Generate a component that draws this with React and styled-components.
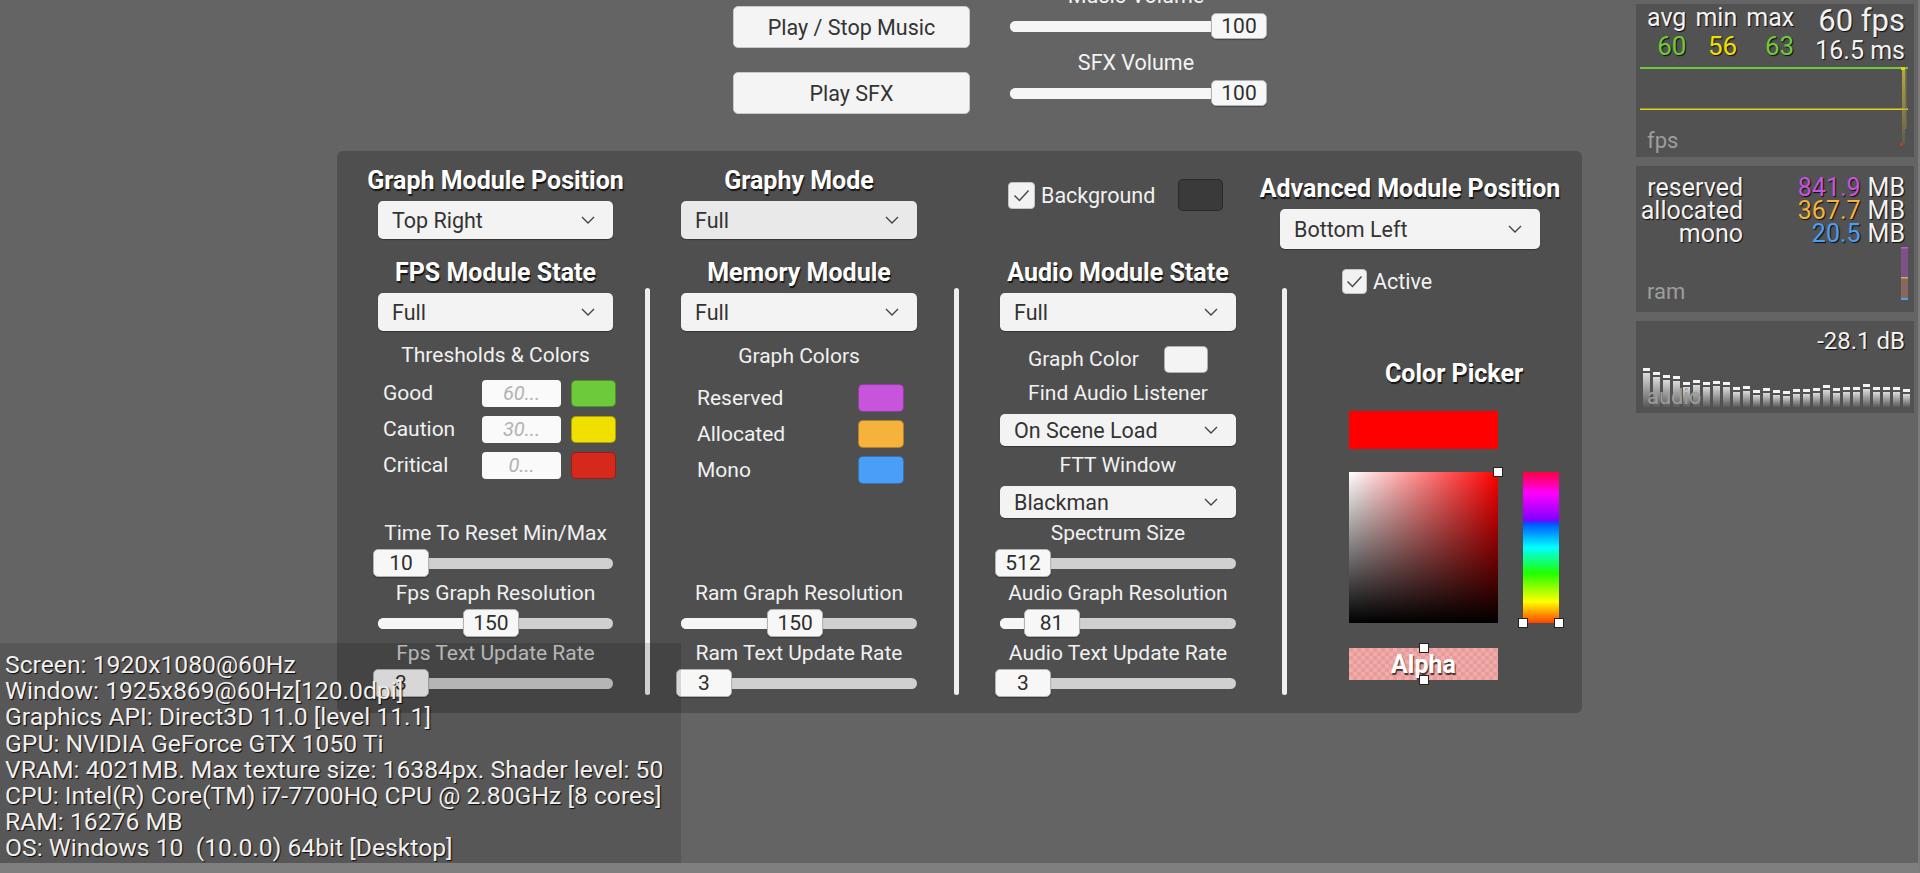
import React from "react";
import styled, { createGlobalStyle } from "styled-components";

const GlobalStyle = createGlobalStyle`
  html, body { margin: 0; padding: 0; background: #646464; }
  body { font-family: Roboto, "Noto Sans", "Liberation Sans", sans-serif; }
  * { box-sizing: border-box; }
`;

const Stage = styled.div`
  position: relative;
  width: 1920px;
  height: 873px;
  overflow: hidden;
  background: #646464;
  border-right: 2px solid #7b7b7b;
  border-bottom: 10px solid #7f7f7f;
  display: flex;
  flex-direction: column;
`;

/* ---------- top demo controls ---------- */

const TopControls = styled.div`
  height: 151px;
  flex-shrink: 0;
  display: flex;
  gap: 40px;
  padding-left: 733px;
`;

const ButtonColumn = styled.div`
  width: 237px;
  padding-top: 6px;
  display: flex;
  flex-direction: column;
  gap: 24px;
`;

const GameButton = styled.div`
  height: 42px;
  background: #f4f4f4;
  border: 1px solid #c9c9c9;
  border-radius: 5px;
  display: flex;
  align-items: center;
  justify-content: center;
  font-size: 21.5px;
  color: #333;
`;

const VolumeColumn = styled.div`
  width: 252px;
  margin-top: -18px;
  display: flex;
  flex-direction: column;
`;

const VolumeLabel = styled.div`
  height: 28px;
  line-height: 28px;
  text-align: center;
  color: #f3f3f3;
  font-size: 21.5px;
  margin-top: ${(p) => p.$mt || 0}px;
`;

/* ---------- slider ---------- */

const SliderRow = styled.div`
  position: relative;
  height: ${(p) => p.$h || 30}px;
  display: flex;
  align-items: center;
`;

const Track = styled.div`
  position: relative;
  flex: 1;
  height: 11px;
  border-radius: 6px;
  background: #d0d0d0;
`;

const Fill = styled.div`
  height: 100%;
  border-radius: 6px;
  background: #f6f6f6;
`;

const Knob = styled.div`
  position: absolute;
  top: 50%;
  transform: translateY(-50%);
  width: 56px;
  height: ${(p) => (p.$compact ? 26 : 28)}px;
  background: #f7f7f7;
  border: 1px solid #b4b4b4;
  border-radius: 5px;
  display: flex;
  align-items: center;
  justify-content: center;
  font-size: 21px;
  color: #2e2e2e;
  box-shadow: 0 1px 1px rgba(0, 0, 0, 0.3);
`;

const Slider = ({ value, pct, compact, h }) => (
  <SliderRow $h={h}>
    <Track>
      <Fill style={{ width: `calc(${pct} * (100% - 46px) + 23px)` }} />
      <Knob $compact={compact} style={{ left: `calc(${pct} * (100% - 46px) - 5px)` }}>
        {value}
      </Knob>
    </Track>
  </SliderRow>
);

/* ---------- settings panel ---------- */

const Panel = styled.div`
  margin-left: 337px;
  width: 1245px;
  height: 562px;
  flex-shrink: 0;
  background: #4f4f4f;
  border-radius: 6px;
  display: flex;
  padding: 12px 0 15px;
`;

const Column = styled.div`
  width: ${(p) => p.$w}px;
  flex-shrink: 0;
  padding: 0 ${(p) => p.$pr || 0}px 0 ${(p) => p.$pl || 0}px;
  display: flex;
  flex-direction: column;
`;

const Divider = styled.div`
  width: 5px;
  flex-shrink: 0;
  margin: 125px 0 3px;
  background: #efefef;
  border-radius: 3px;
`;

const Header = styled.div`
  height: 76px;
  flex-shrink: 0;
  display: flex;
  flex-direction: column;
`;

const Title = styled.div`
  height: 32px;
  line-height: 36px;
  margin-top: ${(p) => p.$mt || 0}px;
  display: flex;
  justify-content: center;
  font-size: 25px;
  font-weight: 700;
  color: #fff;
  white-space: nowrap;
  text-shadow: 1px 2px 1px rgba(0, 0, 0, 0.75);
`;

const Select = styled.div`
  height: ${(p) => p.$h || 38}px;
  margin-top: ${(p) => (p.$mt === undefined ? 6 : p.$mt)}px;
  flex-shrink: 0;
  background: ${(p) => (p.$dim ? "#e9e9e9" : "#f3f3f3")};
  border-radius: 5px;
  display: flex;
  align-items: center;
  justify-content: space-between;
  padding: 0 18px 0 14px;
  color: #333;
  font-size: 21.5px;
  box-shadow: 0 1px 1px rgba(0, 0, 0, 0.35);
`;

const Chevron = () => (
  <svg width="14" height="8" viewBox="0 0 14 8">
    <path d="M1 1 L7 7 L13 1" fill="none" stroke="#444" strokeWidth="1.4" />
  </svg>
);

const Dropdown = ({ children, ...rest }) => (
  <Select {...rest}>
    <span>{children}</span>
    <Chevron />
  </Select>
);

const Caption = styled.div`
  height: 26px;
  line-height: 26px;
  margin-top: ${(p) => p.$mt || 0}px;
  text-align: center;
  font-size: 21px;
  color: #f1f1f1;
  white-space: nowrap;
`;

const ThresholdList = styled.div`
  margin-top: 7px;
  display: flex;
  flex-direction: column;
`;

const ThresholdRow = styled.div`
  height: 36px;
  display: grid;
  grid-template-columns: 1fr 79px 45px;
  column-gap: 10px;
  align-items: center;
  padding-left: 5px;
  margin-right: -3px;
  color: #f1f1f1;
  font-size: 21px;
`;

const NumberField = styled.div`
  height: 27px;
  background: #fafafa;
  border-radius: 4px;
  display: flex;
  align-items: center;
  justify-content: center;
  color: #b3b3b3;
  font-style: italic;
  font-size: 20px;
`;

const Swatch = styled.div`
  width: ${(p) => p.$w || 45}px;
  height: ${(p) => p.$h || 27}px;
  background: ${(p) => p.$color};
  border: 1px solid rgba(0, 0, 0, 0.28);
  border-radius: 5px;
  flex-shrink: 0;
`;

const ColorList = styled.div`
  margin-top: 11px;
  display: flex;
  flex-direction: column;
  padding: 0 13px 0 16px;
`;

const ColorRow = styled.div`
  height: 36px;
  display: flex;
  align-items: center;
  justify-content: space-between;
  color: #f1f1f1;
  font-size: 21px;
`;

const SliderStack = styled.div`
  margin-top: auto;
  display: flex;
  flex-direction: column;
`;

const SliderLabel = styled(Caption)`
  height: 30px;
  line-height: 30px;
  color: ${(p) => (p.$muted ? "#d2d2d2" : "#f1f1f1")};
`;

const CheckRow = styled.div`
  height: ${(p) => p.$h || 32}px;
  margin-top: ${(p) => p.$mt || 0}px;
  margin-left: ${(p) => p.$ml || 0}px;
  display: flex;
  align-items: center;
  color: #f1f1f1;
  font-size: 21.5px;
`;

const Box = styled.span`
  width: ${(p) => p.$size || 27}px;
  height: ${(p) => p.$size || 27}px;
  margin-right: 6px;
  border-radius: 4px;
  background: #f2f2f2;
  border: 1px solid #c4c4c4;
  display: inline-flex;
  align-items: center;
  justify-content: center;
`;

const Check = ({ size }) => (
  <Box $size={size}>
    <svg width="17" height="13" viewBox="0 0 17 13">
      <path d="M1.5 6.5 L6.5 11.5 L15.5 1.5" fill="none" stroke="#4a4a4a" strokeWidth="1.5" />
    </svg>
  </Box>
);

const InlineSwatchRow = styled.div`
  height: 30px;
  margin-top: 13px;
  display: flex;
  align-items: center;
  justify-content: center;
  gap: 25px;
  color: #f1f1f1;
  font-size: 21px;
`;

const WideHeader = styled.div`
  margin-left: -7px;
  width: 260px;
  display: flex;
  flex-direction: column;
`;

/* ---------- color picker ---------- */

const PickerGrid = styled.div`
  margin: 62px 0 0 62px;
  display: grid;
  grid-template-columns: 149px 36px;
  grid-template-rows: 32px 38px 151px 34px;
  column-gap: 25px;
  row-gap: 23px;
  grid-template-areas:
    "title title"
    "preview ."
    "sv hue"
    "alpha .";
`;

const PickerTitle = styled(Title)`
  grid-area: title;
`;

const Preview = styled.div`
  grid-area: preview;
  background: #ff0000;
`;

const SatVal = styled.div`
  grid-area: sv;
  position: relative;
  background: linear-gradient(to top, #000, rgba(0, 0, 0, 0)),
    linear-gradient(to right, #fff, #ff0000);
`;

const HueBar = styled.div`
  grid-area: hue;
  position: relative;
  background: linear-gradient(
    to bottom,
    #ff0040 0%,
    #ff00ff 14%,
    #8000ff 32%,
    #0050ff 34%,
    #00ffff 50%,
    #20ff00 67%,
    #ffff00 86%,
    #ff4000 100%
  );
`;

const AlphaBar = styled.div`
  grid-area: alpha;
  position: relative;
  margin-top: 2px;
  background: repeating-conic-gradient(#f2abab 0 25%, #e79b9b 0 50%) 0 0 / 8px 8px;
  display: flex;
  align-items: center;
  justify-content: center;
  font-size: 25px;
  font-weight: 700;
  color: #fff;
  text-shadow: 1px 2px 1px rgba(0, 0, 0, 0.7);
`;

const Pin = styled.span`
  position: absolute;
  width: 10px;
  height: 10px;
  background: #fff;
  border: 1px solid #222;
  ${(p) => p.$pos}
`;

/* ---------- graphy monitor ---------- */

const Monitor = styled.div`
  position: absolute;
  top: 4px;
  right: 4px;
  width: 278px;
  display: flex;
  flex-direction: column;
  gap: 9px;
  color: #f2f2f2;
  text-shadow: 1px 1px 1px rgba(0, 0, 0, 0.85);
`;

const Module = styled.div`
  position: relative;
  height: ${(p) => p.$h}px;
  background: #525252;
  display: flex;
  flex-direction: column;
`;

const FpsTop = styled.div`
  height: 60px;
  display: flex;
  justify-content: space-between;
  padding: 0 9px 0 11px;
`;

const Stats = styled.div`
  display: flex;
  gap: 9px;
`;

const Stat = styled.div`
  display: flex;
  flex-direction: column;
  align-items: flex-end;
  font-size: 25px;
  line-height: 28px;
`;

const StatValue = styled.span`
  font-size: 26px;
  color: ${(p) => p.$color};
`;

const FpsReadout = styled.div`
  display: flex;
  flex-direction: column;
  align-items: flex-end;
`;

const BigFps = styled.div`
  font-size: 31px;
  line-height: 34px;
`;

const Ms = styled.div`
  font-size: 25px;
  line-height: 26px;
`;

const ModuleTag = styled.span`
  position: absolute;
  left: 11px;
  bottom: ${(p) => p.$b}px;
  font-size: 22px;
  line-height: 24px;
  color: #9d9d9d;
  text-shadow: none;
`;

const RamGrid = styled.div`
  margin-top: 10px;
  display: grid;
  grid-template-columns: 107px 1fr auto;
  column-gap: 7px;
  padding-right: 9px;
  font-size: 25px;
  line-height: 23px;
`;

const RamLabel = styled.span`
  text-align: right;
`;

const RamValue = styled.span`
  text-align: right;
  color: ${(p) => p.$color};
`;

const RamFoot = styled.div`
  flex: 1;
  display: flex;
  justify-content: flex-end;
  align-items: flex-end;
  padding: 0 6px 12px 0;
`;

const Db = styled.div`
  margin-top: 6px;
  padding-right: 9px;
  text-align: right;
  font-size: 24px;
  line-height: 28px;
`;

const Spectrum = styled.svg`
  margin: 10px 0 0 4px;
  display: block;
`;

/* ---------- system info overlay ---------- */

const SystemInfo = styled.div`
  position: absolute;
  left: 0;
  bottom: 0;
  width: 681px;
  height: 220px;
  padding: 9px 0 0 5px;
  background: rgba(0, 0, 0, 0.13);
  color: #f0f0f0;
  font-size: 24.7px;
  line-height: 26.2px;
  white-space: pre;
  text-shadow: 1px 1px 1px rgba(0, 0, 0, 0.9);
`;

const peaks = [368, 372, 375, 376, 382, 380, 382, 381, 382, 387, 386, 390, 388, 390, 391, 389, 389, 388, 385, 388, 387, 387, 384, 387, 387, 387, 389];

const infoLines = [
  "Screen: 1920x1080@60Hz",
  "Window: 1925x869@60Hz[120.0dpi]",
  "Graphics API: Direct3D 11.0 [level 11.1]",
  "GPU: NVIDIA GeForce GTX 1050 Ti",
  "VRAM: 4021MB. Max texture size: 16384px. Shader level: 50",
  "CPU: Intel(R) Core(TM) i7-7700HQ CPU @ 2.80GHz [8 cores]",
  "RAM: 16276 MB",
  "OS: Windows 10  (10.0.0) 64bit [Desktop]",
];

const Labelled = ({ label, value, pct, muted }) => (
  <>
    <SliderLabel $muted={muted}>{label}</SliderLabel>
    <Slider value={value} pct={pct} />
  </>
);

export default function App() {
  return (
    <>
      <GlobalStyle />
      <Stage>
        <TopControls>
          <ButtonColumn>
            <GameButton>Play / Stop Music</GameButton>
            <GameButton>Play SFX</GameButton>
          </ButtonColumn>
          <VolumeColumn>
            <VolumeLabel>Music Volume</VolumeLabel>
            <Slider value="100" pct={1} compact h={32} />
            <VolumeLabel $mt={7}>SFX Volume</VolumeLabel>
            <Slider value="100" pct={1} compact h={32} />
          </VolumeColumn>
        </TopControls>

        <Panel>
          <Column $w={308} $pl={41} $pr={32}>
            <Header>
              <Title>Graph Module Position</Title>
              <Dropdown>Top Right</Dropdown>
            </Header>
            <Title $mt={16}>FPS Module State</Title>
            <Dropdown>Full</Dropdown>
            <Caption $mt={11}>Thresholds &amp; Colors</Caption>
            <ThresholdList>
              <ThresholdRow>
                <span>Good</span>
                <NumberField>60...</NumberField>
                <Swatch $color="#6dcb3b" />
              </ThresholdRow>
              <ThresholdRow>
                <span>Caution</span>
                <NumberField>30...</NumberField>
                <Swatch $color="#efe000" />
              </ThresholdRow>
              <ThresholdRow>
                <span>Critical</span>
                <NumberField>0...</NumberField>
                <Swatch $color="#d4291b" />
              </ThresholdRow>
            </ThresholdList>
            <SliderStack>
              <Labelled label="Time To Reset Min/Max" value="10" pct={0} />
              <Labelled label="Fps Graph Resolution" value="150" pct={0.476} />
              <Labelled label="Fps Text Update Rate" value="3" pct={0} muted />
            </SliderStack>
          </Column>

          <Divider />

          <Column $w={304} $pl={31} $pr={37}>
            <Header>
              <Title>Graphy Mode</Title>
              <Dropdown $dim>Full</Dropdown>
            </Header>
            <Title $mt={16}>Memory Module</Title>
            <Dropdown>Full</Dropdown>
            <Caption $mt={12}>Graph Colors</Caption>
            <ColorList>
              <ColorRow>
                <span>Reserved</span>
                <Swatch $color="#c655db" $w={46} $h={28} />
              </ColorRow>
              <ColorRow>
                <span>Allocated</span>
                <Swatch $color="#f5b33b" $w={46} $h={28} />
              </ColorRow>
              <ColorRow>
                <span>Mono</span>
                <Swatch $color="#4a9ef5" $w={46} $h={28} />
              </ColorRow>
            </ColorList>
            <SliderStack>
              <Labelled label="Ram Graph Resolution" value="150" pct={0.48} />
              <Labelled label="Ram Text Update Rate" value="3" pct={0} />
            </SliderStack>
          </Column>

          <Divider />

          <Column $w={323} $pl={41} $pr={46}>
            <Header>
              <CheckRow $mt={16} $ml={8}>
                <Check />
                Background
                <Swatch $color="#3a3a3a" $w={45} $h={32} style={{ marginLeft: "auto", marginRight: 13 }} />
              </CheckRow>
            </Header>
            <Title $mt={16}>Audio Module State</Title>
            <Dropdown>Full</Dropdown>
            <InlineSwatchRow>
              <span>Graph Color</span>
              <Swatch $color="#f4f4f4" $w={44} $h={27} />
            </InlineSwatchRow>
            <Caption $mt={6}>Find Audio Listener</Caption>
            <Dropdown $h={32} $mt={8}>On Scene Load</Dropdown>
            <Caption $mt={6}>FTT Window</Caption>
            <Dropdown $h={32} $mt={8}>Blackman</Dropdown>
            <SliderStack>
              <Labelled label="Spectrum Size" value="512" pct={0} />
              <Labelled label="Audio Graph Resolution" value="81" pct={0.15} />
              <Labelled label="Audio Text Update Rate" value="3" pct={0} />
            </SliderStack>
          </Column>

          <Divider />

          <Column $w={295}>
            <WideHeader>
              <Title $mt={8}>Advanced Module Position</Title>
              <Dropdown $h={40}>Bottom Left</Dropdown>
            </WideHeader>
            <CheckRow $h={26} $mt={19} $ml={55}>
              <Check size={25} />
              Active
            </CheckRow>
            <PickerGrid>
              <PickerTitle>Color Picker</PickerTitle>
              <Preview />
              <SatVal>
                <Pin $pos="top: -5px; right: -5px;" />
              </SatVal>
              <HueBar>
                <Pin $pos="bottom: -5px; left: -5px;" />
                <Pin $pos="bottom: -5px; right: -5px;" />
              </HueBar>
              <AlphaBar>
                <Pin $pos="top: -5px; left: calc(50% - 5px);" />
                Alpha
                <Pin $pos="bottom: -5px; left: calc(50% - 5px);" />
              </AlphaBar>
            </PickerGrid>
          </Column>
        </Panel>

        <SystemInfo>{infoLines.join("\n")}</SystemInfo>

        <Monitor>
          <Module $h={153}>
            <FpsTop>
              <Stats>
                <Stat>
                  <span>avg</span>
                  <StatValue $color="#6dcb3b">60</StatValue>
                </Stat>
                <Stat>
                  <span>min</span>
                  <StatValue $color="#efe000">56</StatValue>
                </Stat>
                <Stat>
                  <span>max</span>
                  <StatValue $color="#6dcb3b">63</StatValue>
                </Stat>
              </Stats>
              <FpsReadout>
                <BigFps>60 fps</BigFps>
                <Ms>16.5 ms</Ms>
              </FpsReadout>
            </FpsTop>
            <svg width="278" height="93" viewBox="0 0 278 93">
              <defs>
                <linearGradient id="fpsbar" x1="0" y1="0" x2="0" y2="1">
                  <stop offset="0" stopColor="#b9aa3a" />
                  <stop offset="1" stopColor="#b9aa3a" stopOpacity="0.1" />
                </linearGradient>
              </defs>
              <rect x="4" y="3" width="268" height="2" fill="#6dcb3b" />
              <rect x="4" y="44.5" width="268" height="1.5" fill="#e2d21a" />
              <rect x="266" y="5" width="3" height="76" fill="url(#fpsbar)" />
              <rect x="269" y="5" width="1.5" height="60" fill="#8f8a55" opacity="0.6" />
              <rect x="265" y="3" width="4" height="3" fill="#e2d21a" />
              <rect x="264" y="79" width="2" height="3" fill="#e03020" />
            </svg>
            <ModuleTag $b={4}>fps</ModuleTag>
          </Module>

          <Module $h={146}>
            <RamGrid>
              <RamLabel>reserved</RamLabel>
              <RamValue $color="#c655db">841.9</RamValue>
              <span>MB</span>
              <RamLabel>allocated</RamLabel>
              <RamValue $color="#f5b33b">367.7</RamValue>
              <span>MB</span>
              <RamLabel>mono</RamLabel>
              <RamValue $color="#4a9ef5">20.5</RamValue>
              <span>MB</span>
            </RamGrid>
            <RamFoot>
              <svg width="7" height="53" viewBox="0 0 7 53">
                <rect x="0" y="0" width="7" height="30" fill="#7d5289" />
                <rect x="0" y="0" width="7" height="1.5" fill="#c655db" />
                <rect x="0" y="30" width="7" height="21" fill="#86685e" />
                <rect x="0" y="30" width="7" height="1.5" fill="#e3a64a" />
                <rect x="0" y="51" width="7" height="2" fill="#4a9ef5" />
              </svg>
            </RamFoot>
            <ModuleTag $b={8}>ram</ModuleTag>
          </Module>

          <Module $h={92}>
            <Db>-28.1 dB</Db>
            <Spectrum width="270" height="42" viewBox="0 0 270 42">
              <defs>
                <linearGradient id="specbar" x1="0" y1="0" x2="0" y2="1">
                  <stop offset="0" stopColor="#dcdcdc" />
                  <stop offset="1" stopColor="#dcdcdc" stopOpacity="0.05" />
                </linearGradient>
              </defs>
              {peaks.map((top, i) => {
                const y = top - 365;
                return (
                  <g key={i}>
                    <rect x={3 + i * 10} y={y} width="7" height="3" fill="#f4f4f4" />
                    <rect x={3 + i * 10} y={y + 5} width="7" height={42 - y - 5} fill="url(#specbar)" />
                  </g>
                );
              })}
            </Spectrum>
            <ModuleTag $b={4}>audio</ModuleTag>
          </Module>
        </Monitor>
      </Stage>
    </>
  );
}
